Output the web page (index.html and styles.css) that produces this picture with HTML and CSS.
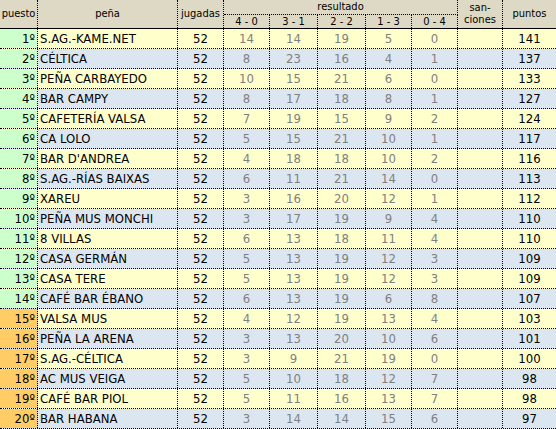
FILE: index.html
```html
<!DOCTYPE html>
<html lang="es">
<head>
<meta charset="utf-8">
<title>Clasificación</title>
<link rel="stylesheet" href="styles.css">
</head>
<body>
<div class="standings">
  <div class="head">
    <div class="h h-puesto">puesto</div>
    <div class="h h-pena">peña</div>
    <div class="h h-jug">jugadas</div>
    <div class="h h-res">resultado</div>
    <div class="h sub">4 - 0</div>
    <div class="h sub">3 - 1</div>
    <div class="h sub">2 - 2</div>
    <div class="h sub">1 - 3</div>
    <div class="h sub">0 - 4</div>
    <div class="h h-san">san-<br>ciones</div>
    <div class="h h-pts">puntos</div>
  </div>

  <div class="row odd"><div class="c pos up">1º</div><div class="c name">S.AG.-KAME.NET</div><div class="c num">52</div><div class="c res">14</div><div class="c res">14</div><div class="c res">19</div><div class="c res">5</div><div class="c res">0</div><div class="c san"></div><div class="c pts">141</div></div>
  <div class="row even"><div class="c pos up">2º</div><div class="c name">CÉLTICA</div><div class="c num">52</div><div class="c res">8</div><div class="c res">23</div><div class="c res">16</div><div class="c res">4</div><div class="c res">1</div><div class="c san"></div><div class="c pts">137</div></div>
  <div class="row odd"><div class="c pos up">3º</div><div class="c name">PEÑA CARBAYEDO</div><div class="c num">52</div><div class="c res">10</div><div class="c res">15</div><div class="c res">21</div><div class="c res">6</div><div class="c res">0</div><div class="c san"></div><div class="c pts">133</div></div>
  <div class="row even"><div class="c pos up">4º</div><div class="c name">BAR CAMPY</div><div class="c num">52</div><div class="c res">8</div><div class="c res">17</div><div class="c res">18</div><div class="c res">8</div><div class="c res">1</div><div class="c san"></div><div class="c pts">127</div></div>
  <div class="row odd"><div class="c pos up">5º</div><div class="c name">CAFETERÍA VALSA</div><div class="c num">52</div><div class="c res">7</div><div class="c res">19</div><div class="c res">15</div><div class="c res">9</div><div class="c res">2</div><div class="c san"></div><div class="c pts">124</div></div>
  <div class="row even"><div class="c pos up">6º</div><div class="c name">CA LOLO</div><div class="c num">52</div><div class="c res">5</div><div class="c res">15</div><div class="c res">21</div><div class="c res">10</div><div class="c res">1</div><div class="c san"></div><div class="c pts">117</div></div>
  <div class="row odd"><div class="c pos up">7º</div><div class="c name">BAR D'ANDREA</div><div class="c num">52</div><div class="c res">4</div><div class="c res">18</div><div class="c res">18</div><div class="c res">10</div><div class="c res">2</div><div class="c san"></div><div class="c pts">116</div></div>
  <div class="row even"><div class="c pos up">8º</div><div class="c name">S.AG.-RÍAS BAIXAS</div><div class="c num">52</div><div class="c res">6</div><div class="c res">11</div><div class="c res">21</div><div class="c res">14</div><div class="c res">0</div><div class="c san"></div><div class="c pts">113</div></div>
  <div class="row odd"><div class="c pos up">9º</div><div class="c name">XAREU</div><div class="c num">52</div><div class="c res">3</div><div class="c res">16</div><div class="c res">20</div><div class="c res">12</div><div class="c res">1</div><div class="c san"></div><div class="c pts">112</div></div>
  <div class="row even"><div class="c pos up">10º</div><div class="c name">PEÑA MUS MONCHI</div><div class="c num">52</div><div class="c res">3</div><div class="c res">17</div><div class="c res">19</div><div class="c res">9</div><div class="c res">4</div><div class="c san"></div><div class="c pts">110</div></div>
  <div class="row odd"><div class="c pos up">11º</div><div class="c name">8 VILLAS</div><div class="c num">52</div><div class="c res">6</div><div class="c res">13</div><div class="c res">18</div><div class="c res">11</div><div class="c res">4</div><div class="c san"></div><div class="c pts">110</div></div>
  <div class="row even"><div class="c pos up">12º</div><div class="c name">CASA GERMÁN</div><div class="c num">52</div><div class="c res">5</div><div class="c res">13</div><div class="c res">19</div><div class="c res">12</div><div class="c res">3</div><div class="c san"></div><div class="c pts">109</div></div>
  <div class="row odd"><div class="c pos up">13º</div><div class="c name">CASA TERE</div><div class="c num">52</div><div class="c res">5</div><div class="c res">13</div><div class="c res">19</div><div class="c res">12</div><div class="c res">3</div><div class="c san"></div><div class="c pts">109</div></div>
  <div class="row even"><div class="c pos up">14º</div><div class="c name">CAFÉ BAR ÉBANO</div><div class="c num">52</div><div class="c res">6</div><div class="c res">13</div><div class="c res">19</div><div class="c res">6</div><div class="c res">8</div><div class="c san"></div><div class="c pts">107</div></div>
  <div class="row odd"><div class="c pos down">15º</div><div class="c name">VALSA MUS</div><div class="c num">52</div><div class="c res">4</div><div class="c res">12</div><div class="c res">19</div><div class="c res">13</div><div class="c res">4</div><div class="c san"></div><div class="c pts">103</div></div>
  <div class="row even"><div class="c pos down">16º</div><div class="c name">PEÑA LA ARENA</div><div class="c num">52</div><div class="c res">3</div><div class="c res">13</div><div class="c res">20</div><div class="c res">10</div><div class="c res">6</div><div class="c san"></div><div class="c pts">101</div></div>
  <div class="row odd"><div class="c pos down">17º</div><div class="c name">S.AG.-CÉLTICA</div><div class="c num">52</div><div class="c res">3</div><div class="c res">9</div><div class="c res">21</div><div class="c res">19</div><div class="c res">0</div><div class="c san"></div><div class="c pts">100</div></div>
  <div class="row even"><div class="c pos down">18º</div><div class="c name">AC MUS VEIGA</div><div class="c num">52</div><div class="c res">5</div><div class="c res">10</div><div class="c res">18</div><div class="c res">12</div><div class="c res">7</div><div class="c san"></div><div class="c pts">98</div></div>
  <div class="row odd"><div class="c pos down">19º</div><div class="c name">CAFÉ BAR PIOL</div><div class="c num">52</div><div class="c res">5</div><div class="c res">11</div><div class="c res">16</div><div class="c res">13</div><div class="c res">7</div><div class="c san"></div><div class="c pts">98</div></div>
  <div class="row even"><div class="c pos down">20º</div><div class="c name">BAR HABANA</div><div class="c num">52</div><div class="c res">3</div><div class="c res">14</div><div class="c res">14</div><div class="c res">15</div><div class="c res">6</div><div class="c san"></div><div class="c pts">97</div></div>
</div>
</body>
</html>
```

FILE: styles.css
```css
html, body {
  margin: 0;
  padding: 0;
  background: #ffffff;
}

.standings {
  width: 556px;
  font-family: "DejaVu Sans Condensed", "DejaVu Sans", sans-serif;
  font-stretch: condensed;
  color: #000000;
  --cols: 38px 140px 46px 46px 48px 48px 46px 46px 45px 53px;
}

.head {
  display: grid;
  grid-template-columns: var(--cols);
  grid-template-rows: 15px 13px;
  background: #ddd9c4;
  border-bottom: 1px solid #000000;
  font-size: 11px;
}

.h {
  box-sizing: border-box;
  border-right: 1px dotted #000000;
  display: flex;
  align-items: center;
  justify-content: center;
  text-align: center;
  line-height: 12px;
}

.h-puesto { grid-column: 1; grid-row: 1 / 3; }
.h-pena   { grid-column: 2; grid-row: 1 / 3; }
.h-jug    { grid-column: 3; grid-row: 1 / 3; }
.h-res    { grid-column: 4 / 9; grid-row: 1; border-bottom: 1px dotted #000000; }
.sub      { grid-row: 2; }
.h-san    { grid-column: 9; grid-row: 1 / 3; line-height: 12px; }
.h-pts    { grid-column: 10; grid-row: 1 / 3; border-right: none; }

.row {
  display: grid;
  grid-template-columns: var(--cols);
  height: 20px;
  box-sizing: border-box;
  border-bottom: 1px dotted #000000;
  font-size: 13px;
  line-height: 19px;
}

.row.odd  { background: #ffffcc; }
.row.even { background: #dce6f1; }

.c {
  box-sizing: border-box;
  border-right: 1px dotted #000000;
  white-space: nowrap;
  overflow: hidden;
  text-align: center;
}

.c.pos  { text-align: right; padding-right: 2px; }
.c.up   { background: #ccffcc; }
.c.down { background: #ffcc66; }
.c.name { text-align: left; padding-left: 2px; }
.c.res  { color: #808080; }
.c.pts  { border-right: none; }
```
